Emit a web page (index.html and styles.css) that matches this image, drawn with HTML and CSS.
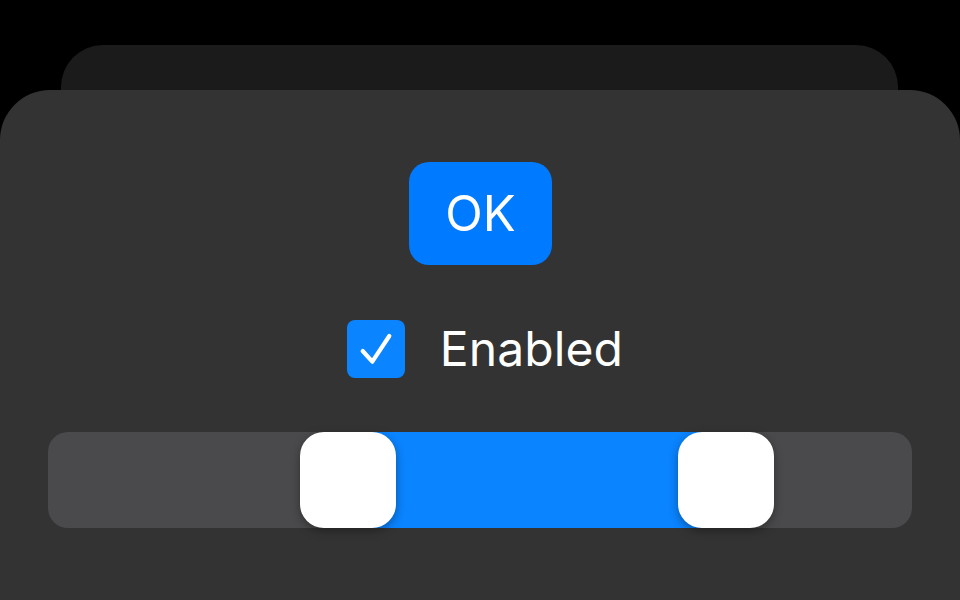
FILE: index.html
```html
<!DOCTYPE html>
<html>
<head>
<meta charset="utf-8">
<link rel="stylesheet" href="styles.css">
</head>
<body>
<div class="stack">
  <div class="sheet-back"></div>
  <div class="sheet-front">
    <button class="ok-btn">OK</button>
    <label class="check-row">
      <span class="checkbox">
        <svg width="58" height="58" viewBox="0 0 58 58"><path d="M15.7 31 L25.3 41.7 L42.3 16" fill="none" stroke="#fff" stroke-width="4.2" stroke-linecap="round" stroke-linejoin="round"/></svg>
      </span>
      <span class="check-label">Enabled</span>
    </label>
    <div class="slider">
      <div class="fill" style="left:34.72%;width:43.75%"></div>
      <div class="thumb" style="left:252px"></div>
      <div class="thumb" style="left:630px"></div>
    </div>
  </div>
</div>
</body>
</html>
```
FILE: styles.css
```css
html, body {
  margin: 0;
  padding: 0;
  background: #000;
  height: 100%;
  overflow: hidden;
}
.stack {
  padding-top: 45px;
  font-family: Inter, "Noto Sans", sans-serif;
}
.sheet-back {
  height: 45px;
  margin: 0 62px 0 61px;
  background: #1b1b1b;
  border-radius: 42px 42px 0 0;
}
.sheet-front {
  height: 510px;
  background: #333333;
  border-radius: 50px 50px 0 0;
  display: flex;
  flex-direction: column;
  align-items: center;
  padding-top: 72px;
  box-sizing: border-box;
}
.ok-btn {
  width: 143px;
  height: 103px;
  border: none;
  border-radius: 20px;
  background: #007aff;
  color: #fff;
  font-family: Inter, "Noto Sans", sans-serif;
  font-size: 49px;
  font-weight: 400;
  padding: 0;
  margin-left: 1px;
}
.check-row {
  display: flex;
  align-items: center;
  gap: 35px;
  margin-top: 55px;
  margin-left: 10px;
}
.checkbox {
  width: 58px;
  height: 58px;
  border-radius: 8px;
  background: #0a84ff;
  display: block;
}
.checkbox svg {
  display: block;
}
.check-label {
  color: #fff;
  font-size: 48px;
  line-height: 58px;
  letter-spacing: 0.1px;
}
.slider {
  position: relative;
  align-self: stretch;
  margin: 54px 48px 0;
  height: 96px;
  border-radius: 20px;
  background: #4a4a4c;
}
.fill {
  position: absolute;
  top: 0;
  bottom: 0;
  background: #0a84ff;
}
.thumb {
  position: absolute;
  top: 0;
  width: 96px;
  height: 96px;
  border-radius: 24px;
  background: #fff;
  box-shadow: 0 3px 10px rgba(0, 0, 0, 0.35);
}
```
